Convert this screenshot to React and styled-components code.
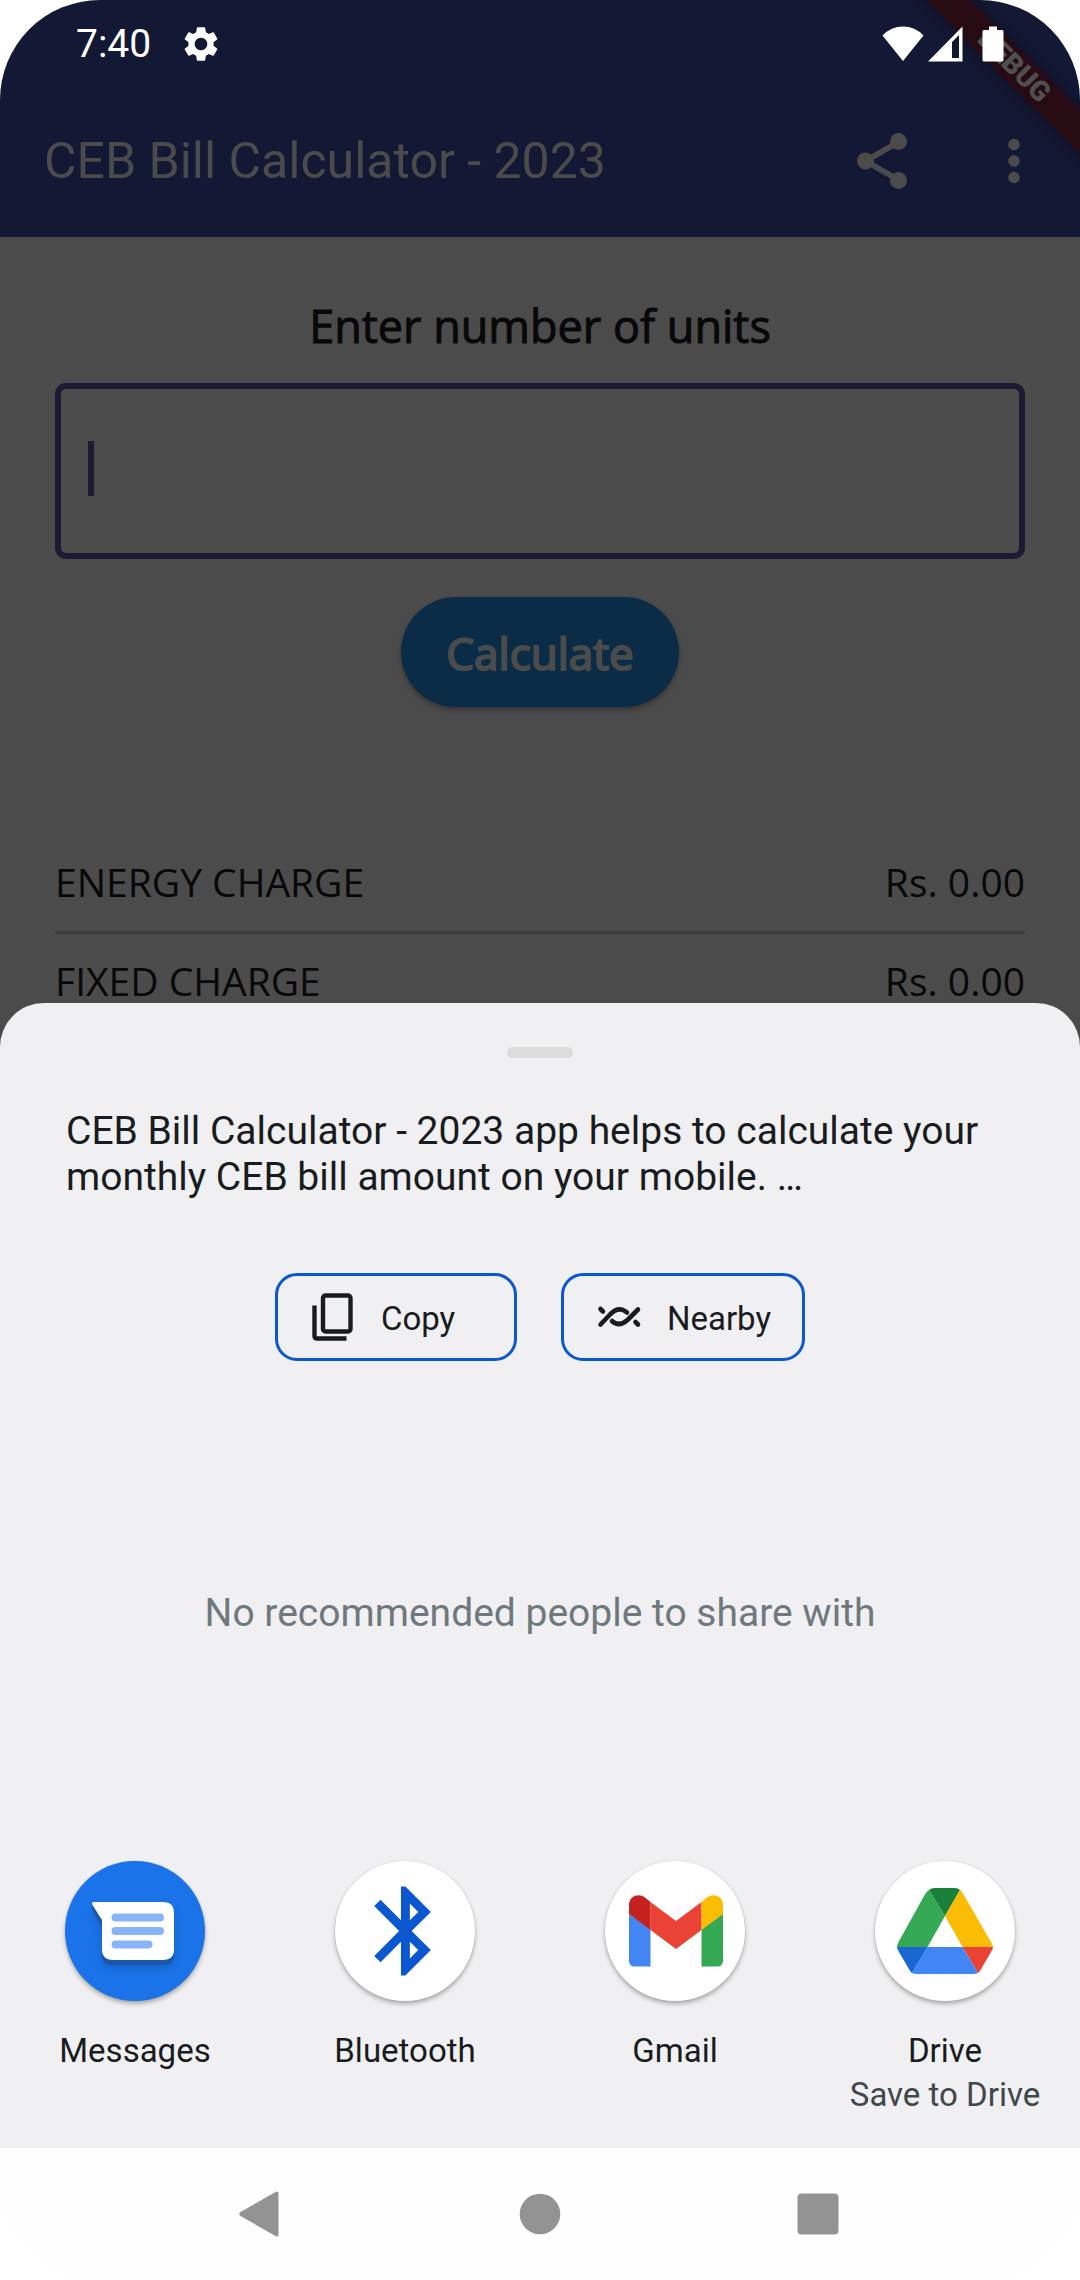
import React, { useState } from "react";
import styled, { createGlobalStyle } from "styled-components";

const GlobalStyle = createGlobalStyle`
  *, *::before, *::after { box-sizing: border-box; }
  body { margin: 0; background: #ffffff; }
  button, input { font: inherit; color: inherit; margin: 0; padding: 0; border: 0; background: none; }
  h1, p, dl, dd, dt { margin: 0; font-weight: 400; }
  svg { display: block; }
`;

const Screen = styled.div`
  display: flex;
  flex-direction: column;
  min-height: 100vh;
  overflow: hidden;
  position: relative;
  border-radius: 100px;
  font-family: Roboto, sans-serif;
`;

const Header = styled.header`
  background: #131835;
  color: #4b4b4b;
`;

const StatusBar = styled.div`
  position: relative;
  z-index: 2;
  display: flex;
  align-items: center;
  justify-content: space-between;
  height: 84px;
  padding: 4px 76px 0;
  color: #ffffff;
  font-size: 39px;
  line-height: 46px;
`;

const StatusGroup = styled.div`
  display: flex;
  align-items: center;
  gap: ${(p) => p.$gap}px;
`;

const Toolbar = styled.div`
  display: flex;
  align-items: center;
  height: 153px;
  padding: 0 22px 0 44px;
`;

const AppTitle = styled.h1`
  flex: 1;
  font-size: 50px;
  line-height: 60px;
`;

const IconButton = styled.button`
  display: grid;
  place-items: center;
  width: 88px;
  height: 132px;
`;

const Actions = styled.div`
  display: flex;
  gap: 44px;
`;

const DebugBanner = styled.div`
  position: absolute;
  z-index: 1;
  top: 50px;
  right: -66px;
  width: 264px;
  height: 32px;
  transform: rotate(45deg);
  background: #270b13;
  box-shadow: 0 0 16px rgba(0, 0, 0, 0.4);
  color: #4f4f4f;
  font-size: 28px;
  font-weight: 900;
  line-height: 32px;
  text-align: center;
`;

const Content = styled.div`
  flex: 1;
  display: flex;
  flex-direction: column;
  background: #4b4b4b;
`;

const Main = styled.main`
  flex: 1 1 0;
  min-height: 0;
  overflow: hidden;
  display: flex;
  flex-direction: column;
  padding: 59px 55px 0;
  font-family: "Open Sans", "Noto Sans", sans-serif;
  color: #080808;
`;

const UnitsForm = styled.form`
  display: flex;
  flex-direction: column;
  align-items: center;
`;

const FieldLabel = styled.label`
  font-size: 45px;
  line-height: 60px;
  -webkit-text-stroke: 1px currentColor;
`;

const Field = styled.div`
  position: relative;
  width: 100%;
  margin: 27px 0 38px;
`;

const UnitsInput = styled.input`
  display: block;
  width: 100%;
  height: 176px;
  padding: 0 33px;
  border: 6px solid #1f1a33;
  border-radius: 11px;
  outline: 0;
  font-size: 45px;
  caret-color: transparent;
`;

const Caret = styled.span`
  position: absolute;
  left: 33px;
  top: 58px;
  width: 6px;
  height: 55px;
  background: #1f1a33;
`;

const CalculateButton = styled.button`
  height: 110px;
  padding: 2px 45px 0;
  border-radius: 55px;
  background: #0a2c47;
  box-shadow: 0 3px 5px rgba(0, 0, 0, 0.3);
  color: #4b4b4b;
  font-size: 44px;
  line-height: 60px;
  -webkit-text-stroke: 2px currentColor;
`;

const Charges = styled.dl`
  margin-top: 128px;
`;

const ChargeRow = styled.div`
  display: flex;
  justify-content: space-between;
  height: 99px;
  padding-top: 25px;
  border-bottom: 3px solid #3b3b3e;
  font-size: 39px;
  line-height: 44px;
`;

const Sheet = styled.section`
  display: flex;
  flex-direction: column;
  align-items: center;
  padding-top: 44px;
  border-radius: 44px 44px 0 0;
  background: #f0f0f2;
  color: #191c1e;
`;

const Handle = styled.div`
  width: 66px;
  height: 11px;
  border-radius: 6px;
  background: #dcdcdc;
`;

const ShareText = styled.p`
  align-self: stretch;
  padding: 50px 66px 0;
  font-size: 39px;
  line-height: 46px;
`;

const ChipRow = styled.div`
  display: flex;
  gap: 44px;
  margin-top: 73px;
`;

const Chip = styled.button`
  display: flex;
  align-items: center;
  gap: 22px;
  min-width: 242px;
  height: 88px;
  padding: 0 31px 0 27px;
  border: 3px solid #0b57d0;
  border-radius: 22px;
  font-size: 33px;
  line-height: 40px;
`;

const ChipLabel = styled.span`
  padding-top: 4px;
`;

const EmptyMessage = styled.p`
  margin-top: 229px;
  color: #6f787c;
  font-size: 39px;
  line-height: 46px;
`;

const AppGrid = styled.div`
  align-self: stretch;
  display: grid;
  grid-template-columns: repeat(4, 1fr);
  margin-top: 225px;
  height: 287px;
`;

const AppButton = styled.button`
  display: flex;
  flex-direction: column;
  align-items: center;
  font-size: 33px;
  line-height: 44px;
`;

const AppIcon = styled.span`
  width: 140px;
  height: 140px;
  margin-bottom: 28px;
  border-radius: 50%;
  background: ${(p) => p.$fill};
  box-shadow: 0 3px 4px rgba(0, 0, 0, 0.28), 0 0 2px rgba(0, 0, 0, 0.12);
`;

const AppNote = styled.span`
  color: #40484c;
`;

const NavBar = styled.nav`
  display: flex;
  justify-content: center;
  height: 132px;
  background: #fefefe;
  color: #939393;
`;

const NavButton = styled.button`
  display: grid;
  place-items: center;
  width: 278px;
`;

const GearIcon = () => (
  <svg width="42" height="42" viewBox="0 0 24 24" fill="#ffffff" aria-hidden="true">
    <path d="M19.14 12.94c.04-.3.06-.61.06-.94 0-.32-.02-.64-.07-.94l2.03-1.58c.18-.14.23-.41.12-.61l-1.92-3.32c-.12-.22-.37-.29-.59-.22l-2.39.96c-.5-.38-1.03-.7-1.62-.94l-.36-2.54c-.04-.24-.24-.41-.48-.41h-3.84c-.24 0-.43.17-.47.41l-.36 2.54c-.59.24-1.13.57-1.62.94l-2.39-.96c-.22-.08-.47 0-.59.22L2.74 8.87c-.12.21-.08.47.12.61l2.03 1.58c-.05.3-.09.63-.09.94s.02.64.07.94l-2.03 1.58c-.18.14-.23.41-.12.61l1.92 3.32c.12.22.37.29.59.22l2.39-.96c.5.38 1.03.7 1.62.94l.36 2.54c.05.24.24.41.48.41h3.84c.24 0 .44-.17.47-.41l.36-2.54c.59-.24 1.13-.56 1.62-.94l2.39.96c.22.08.47 0 .59-.22l1.92-3.32c.12-.22.07-.47-.12-.61l-2.01-1.58zM12 15.6c-1.98 0-3.6-1.62-3.6-3.6s1.62-3.6 3.6-3.6 3.6 1.62 3.6 3.6-1.62 3.6-3.6 3.6z" />
  </svg>
);

const WifiIcon = () => (
  <svg width="42" height="36" viewBox="0 0 42 36" fill="#ffffff" aria-hidden="true">
    <path d="M21 35L0.500 9.500Q9 0.500 21 0.500T41.500 9.500Z" />
  </svg>
);

const SignalIcon = () => (
  <svg width="35" height="36" viewBox="0 0 35 36" fill="#ffffff" aria-hidden="true">
    <path fillRule="evenodd" d="M0 35.500L34.500 0.500V35.500ZM24 16V32H31V9Z" />
  </svg>
);

const BatteryIcon = () => (
  <svg width="22" height="36" viewBox="0 0 22 36" fill="#ffffff" aria-hidden="true">
    <path d="M7 0.500H15V4H20Q21.500 4 21.500 5.500V34Q21.500 35.500 20 35.500H2Q0.500 35.500 0.500 34V5.500Q0.500 4 2 4H7Z" />
  </svg>
);

const ShareIcon = () => (
  <svg width="50" height="56" viewBox="0 0 50 56" fill="currentColor" aria-hidden="true">
    <path d="M41.500 9L8.500 28L41.500 47" fill="none" stroke="currentColor" strokeWidth="5.500" />
    <circle cx="41.500" cy="8.500" r="8.500" />
    <circle cx="8.500" cy="28" r="8.500" />
    <circle cx="41.500" cy="47.500" r="8.500" />
  </svg>
);

const MoreIcon = () => (
  <svg width="12" height="46" viewBox="0 0 12 46" fill="currentColor" aria-hidden="true">
    <circle cx="6" cy="6.500" r="5.800" />
    <circle cx="6" cy="23" r="5.800" />
    <circle cx="6" cy="39.500" r="5.800" />
  </svg>
);

const CopyIcon = () => (
  <svg width="54" height="54" viewBox="0 0 54 54" fill="none" stroke="currentColor" strokeWidth="4.400" aria-hidden="true">
    <rect x="18" y="5.500" width="27.500" height="36" rx="2.500" />
    <path d="M9.500 15.500V46Q9.500 48.500 12 48.500H41.500" />
  </svg>
);

const NearbyIcon = () => (
  <svg width="54" height="54" viewBox="0 0 54 54" fill="none" stroke="currentColor" strokeWidth="4.600" strokeLinecap="round" strokeLinejoin="round" aria-hidden="true">
    <path d="M9.500 34.500L19.500 24Q28 15.500 36 22.500" />
    <path d="M47 19.500L36.500 30Q28 37.500 21 31" />
    <path d="M9.500 19L12 21.500M44.500 32L47 34.500" />
  </svg>
);

const MessagesIcon = () => (
  <svg width="140" height="140" viewBox="0 0 140 140" aria-hidden="true">
    <defs>
      <filter id="bubbleGlow" x="-30%" y="-30%" width="160%" height="180%">
        <feGaussianBlur stdDeviation="5" />
      </filter>
    </defs>
    <path d="M30 48H99Q109 48 109 58V96Q109 106 99 106H47Q37 106 37 96V66L29 52Z" fill="#174ea6" opacity="0.55" filter="url(#bubbleGlow)" />
    <path d="M27 43V49L37 66V94Q37 104 47 104H99Q109 104 109 94V60Z" fill="#1a56ab" />
    <path d="M29 41H98Q109 41 109 52V88Q109 99 98 99H48Q37 99 37 88V59L27.500 44Q26 41 29 41Z" fill="#ffffff" />
    <path d="M50.500 56.500H95M50.500 70H95M50.500 83.500H83.500" stroke="#8ab4f8" strokeWidth="8" strokeLinecap="round" />
  </svg>
);

const BluetoothIcon = () => (
  <svg width="140" height="140" viewBox="0 0 140 140" aria-hidden="true">
    <path
      transform="translate(17 16.600) scale(4.450)"
      fill="#0b57d0"
      d="M17.710 7.710L12 2h-1v7.590L6.410 5 5 6.410 10.590 12 5 17.590 6.410 19 11 14.410V22h1l5.710-5.710-4.300-4.290 4.300-4.290zM13 5.830l1.880 1.880L13 9.590V5.830zm1.880 10.460L13 18.170v-3.760l1.880 1.880z"
    />
  </svg>
);

const GmailIcon = () => (
  <svg width="140" height="140" viewBox="0 0 140 140" aria-hidden="true">
    <path d="M24 53L45.500 68V105.500H30Q24 105.500 24 99.500Z" fill="#4285f4" />
    <path d="M118 53L96.500 68V105.500H112Q118 105.500 118 99.500Z" fill="#34a853" />
    <path d="M45.500 41L71 60L96.500 41V69L71 88L45.500 69Z" fill="#ea4335" />
    <path d="M24 53V44C24 35.500 33 31.500 40 36.500L45.500 41V69Z" fill="#c5221f" />
    <path d="M118 53V44C118 35.500 109 31.500 102 36.500L96.500 41V69Z" fill="#fbbc04" />
  </svg>
);

const DriveIcon = () => (
  <svg width="140" height="140" viewBox="0 0 140 140" aria-hidden="true">
    <path d="M54 29L70 55L52.500 86H22Q22 84 23.500 81L50.500 32.500Q52 30 54 29Z" fill="#34a853" />
    <path d="M54 29Q56 27 60 27H80Q83 27 85 29L70 55Z" fill="#188038" />
    <path d="M85 29Q87 30 88 32.500L116 81Q118 84 118 86H87.500L70 55Z" fill="#fbbc04" />
    <path d="M118 86Q118 88 116 91L105.500 109Q104.500 111 103 112L87.500 86Z" fill="#ea4335" />
    <path d="M52.500 86H87.500L103 112Q101 113 98 113H42Q39 113 37 112Z" fill="#4285f4" />
    <path d="M22 86H52.500L37 112Q35.500 111 34.500 109L24 91Q22 88 22 86Z" fill="#1967d2" />
  </svg>
);

const BackIcon = () => (
  <svg width="46" height="46" viewBox="0 0 46 46" fill="currentColor" aria-hidden="true">
    <path d="M37 0.800Q39.500 -0.500 39.500 2.500V43.500Q39.500 46.500 37 45.200L1.500 25Q-1 23 1.500 21Z" />
  </svg>
);

const HomeIcon = () => (
  <svg width="42" height="42" viewBox="0 0 42 42" fill="currentColor" aria-hidden="true">
    <circle cx="21" cy="21" r="20.300" />
  </svg>
);

const RecentsIcon = () => (
  <svg width="42" height="42" viewBox="0 0 42 42" fill="currentColor" aria-hidden="true">
    <rect x="0.500" y="0.500" width="41" height="41" rx="4" />
  </svg>
);

const charges = [
  { name: "ENERGY CHARGE", amount: "Rs. 0.00" },
  { name: "FIXED CHARGE", amount: "Rs. 0.00" },
];

const targets = [
  { name: "Messages", fill: "#1a73e8", Icon: MessagesIcon },
  { name: "Bluetooth", fill: "#ffffff", Icon: BluetoothIcon },
  { name: "Gmail", fill: "#ffffff", Icon: GmailIcon },
  { name: "Drive", note: "Save to Drive", fill: "#ffffff", Icon: DriveIcon },
];

export default function App() {
  const [units, setUnits] = useState("");
  return (
    <Screen>
      <GlobalStyle />
      <Header>
        <StatusBar>
          <StatusGroup $gap={29}>
            <span>7:40</span>
            <GearIcon />
          </StatusGroup>
          <StatusGroup $gap={19}>
            <StatusGroup $gap={4}>
              <WifiIcon />
              <SignalIcon />
            </StatusGroup>
            <BatteryIcon />
          </StatusGroup>
        </StatusBar>
        <Toolbar>
          <AppTitle>CEB Bill Calculator - 2023</AppTitle>
          <Actions>
            <IconButton type="button" aria-label="Share">
              <ShareIcon />
            </IconButton>
            <IconButton type="button" aria-label="More options">
              <MoreIcon />
            </IconButton>
          </Actions>
        </Toolbar>
        <DebugBanner>DEBUG</DebugBanner>
      </Header>

      <Content>
        <Main>
          <UnitsForm onSubmit={(e) => e.preventDefault()}>
            <FieldLabel htmlFor="units">Enter number of units</FieldLabel>
            <Field>
              <UnitsInput
                id="units"
                inputMode="numeric"
                value={units}
                onChange={(e) => setUnits(e.target.value)}
              />
              {units === "" && <Caret />}
            </Field>
            <CalculateButton type="submit">Calculate</CalculateButton>
          </UnitsForm>
          <Charges>
            {charges.map((charge) => (
              <ChargeRow key={charge.name}>
                <dt>{charge.name}</dt>
                <dd>{charge.amount}</dd>
              </ChargeRow>
            ))}
          </Charges>
        </Main>

        <Sheet aria-label="Share">
          <Handle />
          <ShareText>
            CEB Bill Calculator - 2023 app helps to calculate your monthly CEB bill amount on your mobile. …
          </ShareText>
          <ChipRow>
            <Chip type="button">
              <CopyIcon />
              <ChipLabel>Copy</ChipLabel>
            </Chip>
            <Chip type="button">
              <NearbyIcon />
              <ChipLabel>Nearby</ChipLabel>
            </Chip>
          </ChipRow>
          <EmptyMessage>No recommended people to share with</EmptyMessage>
          <AppGrid>
            {targets.map(({ name, note, fill, Icon }) => (
              <AppButton type="button" key={name}>
                <AppIcon $fill={fill}>
                  <Icon />
                </AppIcon>
                <span>{name}</span>
                {note && <AppNote>{note}</AppNote>}
              </AppButton>
            ))}
          </AppGrid>
        </Sheet>
      </Content>

      <NavBar aria-label="System navigation">
        <NavButton type="button" aria-label="Back">
          <BackIcon />
        </NavButton>
        <NavButton type="button" aria-label="Home">
          <HomeIcon />
        </NavButton>
        <NavButton type="button" aria-label="Recent apps">
          <RecentsIcon />
        </NavButton>
      </NavBar>
    </Screen>
  );
}
